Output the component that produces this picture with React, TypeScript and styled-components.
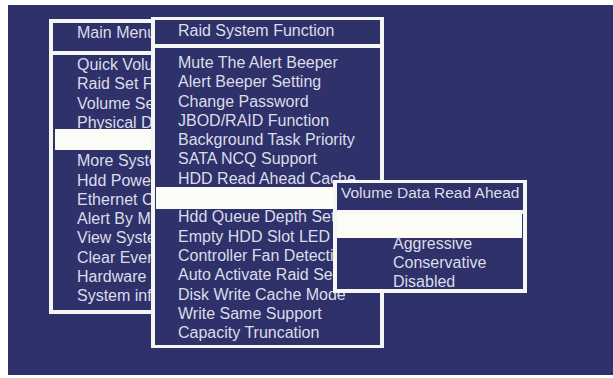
import React from "react";
import styled, { createGlobalStyle } from "styled-components";

const GlobalStyle = createGlobalStyle`
  html, body {
    margin: 0;
    padding: 0;
    background: #ffffff;
  }
  body {
    font-family: "Liberation Sans", Arial, sans-serif;
  }
`;

const BLUE = "#2e316a";
const FRAME = "#f6f6f4";
const TEXT = "#dcdde8";

const Screen = styled.div`
  position: relative;
  margin: 5px 0 3px 8px;
  width: 605px;
  height: 370px;
  background: ${BLUE};
  overflow: hidden;
`;

// a window on the BIOS "desktop": white frame with blue boxes inside
const Window = styled.div<{ $left: number; $top: number; $w: number; $h: number; $pad: string; $gap: number }>`
  position: absolute;
  left: ${(p) => p.$left}px;
  top: ${(p) => p.$top}px;
  width: ${(p) => p.$w}px;
  height: ${(p) => p.$h}px;
  box-sizing: border-box;
  padding: ${(p) => p.$pad};
  background: ${FRAME};
  display: flex;
  flex-direction: column;
  gap: ${(p) => p.$gap}px;
`;

const Header = styled.div<{ $h: number; $lh: number; $indent: number; $size?: number }>`
  height: ${(p) => p.$h}px;
  flex: none;
  background: ${BLUE};
  color: ${TEXT};
  font-size: ${(p) => p.$size ?? 16}px;
  line-height: ${(p) => p.$lh}px;
  padding-left: ${(p) => p.$indent}px;
  white-space: nowrap;
  overflow: hidden;
`;

const Body = styled.div<{ $h: number; $padTop: number }>`
  height: ${(p) => p.$h}px;
  flex: none;
  box-sizing: border-box;
  padding-top: ${(p) => p.$padTop}px;
  background: ${BLUE};
  display: flex;
  flex-direction: column;
  overflow: hidden;
`;

const Row = styled.div<{ $h: number; $indent: number }>`
  height: ${(p) => p.$h}px;
  flex: none;
  line-height: ${(p) => p.$h}px;
  padding-left: ${(p) => p.$indent}px;
  color: ${TEXT};
  font-size: 16px;
  white-space: nowrap;
`;

const Highlight = styled.div<{ $h: number; $m: string }>`
  height: ${(p) => p.$h}px;
  flex: none;
  margin: ${(p) => p.$m};
  background: #fcfcf7;
`;

const mainItems = [
  "Quick Volume/Raid Setup",
  "Raid Set Function",
  "Volume Set Function",
  "Physical Drives",
  null,
  "More System Functions",
  "Hdd Power Management",
  "Ethernet Configuration",
  "Alert By Mail Config",
  "View System Events",
  "Clear Event Buffer",
  "Hardware Monitor",
  "System information",
];

const sysItems = [
  "Mute The Alert Beeper",
  "Alert Beeper Setting",
  "Change Password",
  "JBOD/RAID Function",
  "Background Task Priority",
  "SATA NCQ Support",
  "HDD Read Ahead Cache",
  null,
  "Hdd Queue Depth Setting",
  "Empty HDD Slot LED",
  "Controller Fan Detection",
  "Auto Activate Raid Set",
  "Disk Write Cache Mode",
  "Write Same Support",
  "Capacity Truncation",
];

const readAhead = ["Aggressive", "Conservative", "Disabled"];

const App: React.FC = () => {
  return (
    <>
      <GlobalStyle />
      <Screen>
        <Window $left={41} $top={14} $w={106} $h={295} $pad="4px 0 4px 4px" $gap={4}>
          <Header $h={28} $lh={20} $indent={24}>Main Menu</Header>
          <Body $h={255} $padTop={0}>
            {mainItems.map((item, i) =>
              item ? (
                <Row key={i} $h={19.25} $indent={24}>
                  {item}
                </Row>
              ) : (
                <Highlight key={i} $h={21} $m="-3px 0 1.25px 2px" />
              )
            )}
          </Body>
        </Window>

        <Window $left={143} $top={12} $w={233} $h={331} $pad="3px 4px" $gap={4}>
          <Header $h={24} $lh={22} $indent={23}>Raid System Function</Header>
          <Body $h={297} $padTop={5}>
            {sysItems.map((item, i) =>
              item ? (
                <Row key={i} $h={19.3} $indent={23}>
                  {item}
                </Row>
              ) : (
                <Highlight key={i} $h={22} $m="-1.5px 0 -1.2px 1px" />
              )
            )}
          </Body>
        </Window>

        <Window $left={325} $top={175} $w={194} $h={113} $pad="3px 4px 4px" $gap={4}>
          <Header $h={27} $lh={20} $indent={4} $size={15.5}>Volume Data Read Ahead</Header>
          <Body $h={75} $padTop={0}>
            <Highlight $h={24} $m="0 1px -4px 0" />
            {readAhead.map((item) => (
              <Row key={item} $h={19} $indent={56}>
                {item}
              </Row>
            ))}
          </Body>
        </Window>
      </Screen>
    </>
  );
};

export default App;
